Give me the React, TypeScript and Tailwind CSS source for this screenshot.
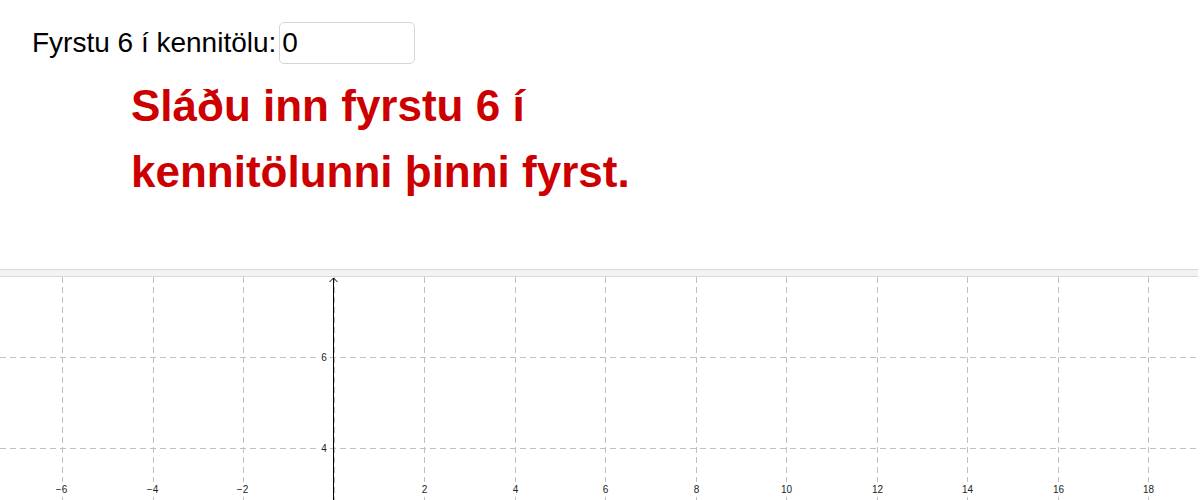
const GRID_X = [-6, -4, -2, 2, 4, 6, 8, 10, 12, 14, 16, 18];
const ORIGIN_X = 333.5;
const UNIT = 45.25;

function Graph() {
  const lines = [-6, -4, -2, 0, 2, 4, 6, 8, 10, 12, 14, 16, 18];
  return (
    <svg width="1198" height="223" className="block" style={{ fontFamily: '"Liberation Sans", Arial, sans-serif' }}>
      {lines.map((v) => {
        const x = Math.round(ORIGIN_X + v * UNIT) + 0.5;
        return (
          <line key={v} x1={x} y1={0} x2={x} y2={223} stroke="#c0c0c0" strokeWidth={1} strokeDasharray="6 4" />
        );
      })}
      {[80.5, 171.5].map((y) => (
        <line key={y} x1={0} y1={y} x2={1198} y2={y} stroke="#c0c0c0" strokeWidth={1} strokeDasharray="6 4" />
      ))}
      {/* y axis */}
      <line x1={333.5} y1={1} x2={333.5} y2={223} stroke="#000" strokeWidth={1} />
      <path d="M329.5 5 L333.5 1 L337.5 5" fill="none" stroke="#000" strokeWidth={1} />
      <rect x={318} y={73} width={12} height={14} fill="#fff" />
      <text x={324} y={84} fontSize="10" textAnchor="middle" fill="#222">6</text>
      <rect x={318} y={164} width={12} height={14} fill="#fff" />
      <text x={324} y={175} fontSize="10" textAnchor="middle" fill="#222">4</text>
      {GRID_X.map((v) => {
        const x = Math.round(ORIGIN_X + v * UNIT) + 0.5;
        const label = v < 0 ? `\u2212${-v}` : `${v}`;
        return (
          <g key={v}>
            <rect x={x - 7} y={205} width={14} height={13} fill="#fff" />
            <text x={x + (v < 0 ? -1 : 0)} y={216} fontSize="10" textAnchor="middle" fill="#222">
              {label}
            </text>
          </g>
        );
      })}
    </svg>
  );
}

export default function App() {
  return (
    <div className="w-[1200px] h-[500px] overflow-hidden bg-white font-['Liberation_Sans',Arial,sans-serif]">
      <div className="h-[269px] w-[1198px]">
        <div className="flex items-center pl-[32px] pt-[22px]">
          <span className="text-[28px] leading-[32px] text-black">Fyrstu 6 í kennitölu:</span>
          <div className="ml-[3px] h-[42px] w-[136px] rounded-[5px] border border-[#d6d6d6] flex items-center pl-[2px]">
            <span className="text-[28px] leading-[32px] text-black">0</span>
          </div>
        </div>
        <div className="ml-[131px] mt-[9px] text-[44px] leading-[66px] font-bold text-[#cc0000]">
          Sláðu inn fyrstu 6 í
          <br />
          kennitölunni þinni fyrst.
        </div>
      </div>
      <div className="h-[8px] w-[1198px] border-y border-[#d9d9d9] bg-[#f3f3f3]" />
      <Graph />
    </div>
  );
}
